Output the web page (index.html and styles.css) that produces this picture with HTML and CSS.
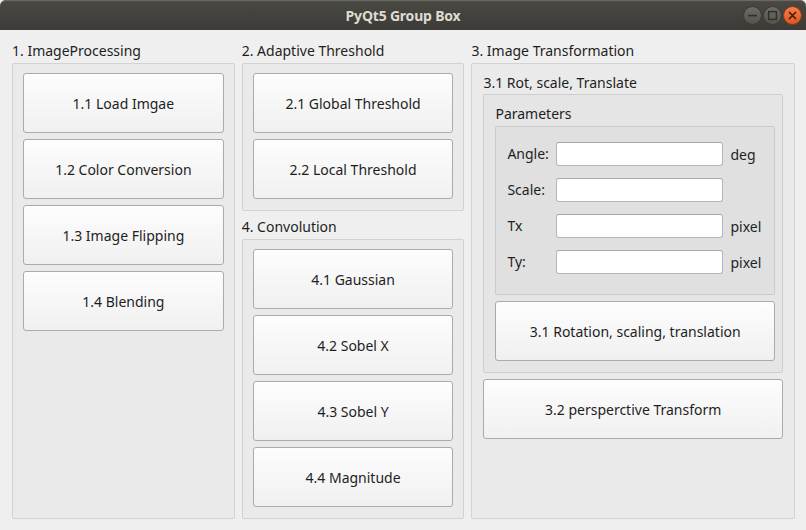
FILE: index.html
```html
<!DOCTYPE html>
<html>
<head>
<meta charset="utf-8">
<title>PyQt5 Group Box</title>
<link rel="stylesheet" href="styles.css">
</head>
<body>
<div class="window">
  <header class="titlebar">
    <div class="tb-side"></div>
    <div class="tb-title">PyQt5 Group Box</div>
    <div class="tb-side tb-buttons">
      <span class="wbtn">
        <svg width="19" height="19" viewBox="0 0 19 19"><defs><linearGradient id="g1" x1="0" y1="0" x2="0" y2="1"><stop offset="0" stop-color="#6e6c66"/><stop offset="1" stop-color="#55534e"/></linearGradient></defs><circle cx="9.5" cy="9.5" r="9" fill="url(#g1)" stroke="#3a3935" stroke-width="1"/><rect x="5" y="8.8" width="9" height="1.6" fill="#2f2e2b"/></svg>
      </span>
      <span class="wbtn">
        <svg width="19" height="19" viewBox="0 0 19 19"><circle cx="9.5" cy="9.5" r="9" fill="url(#g1)" stroke="#3a3935" stroke-width="1"/><rect x="5.6" y="5.6" width="7.8" height="7.8" fill="none" stroke="#2f2e2b" stroke-width="1.4"/></svg>
      </span>
      <span class="wbtn">
        <svg width="19" height="19" viewBox="0 0 19 19"><defs><linearGradient id="g2" x1="0" y1="0" x2="0" y2="1"><stop offset="0" stop-color="#f3804f"/><stop offset="1" stop-color="#e25420"/></linearGradient></defs><circle cx="9.5" cy="9.5" r="9" fill="url(#g2)" stroke="#8a3a17" stroke-width="1"/><path d="M6.4 6.4 L12.6 12.6 M12.6 6.4 L6.4 12.6" stroke="#4a1f0c" stroke-width="1.5" stroke-linecap="round"/></svg>
      </span>
    </div>
  </header>

  <main class="content">
    <section class="column col-narrow">
      <div class="gtitle">1. ImageProcessing</div>
      <div class="gbox gbox-fill">
        <button class="btn">1.1 Load Imgae</button>
        <button class="btn">1.2 Color Conversion</button>
        <button class="btn">1.3 Image Flipping</button>
        <button class="btn">1.4 Blending</button>
      </div>
    </section>

    <section class="column col-narrow">
      <div class="gtitle">2. Adaptive Threshold</div>
      <div class="gbox gbox-short">
        <button class="btn">2.1 Global Threshold</button>
        <button class="btn">2.2 Local Threshold</button>
      </div>
      <div class="gtitle gtitle-next">4. Convolution</div>
      <div class="gbox gbox-fill">
        <button class="btn">4.1 Gaussian</button>
        <button class="btn">4.2 Sobel X</button>
        <button class="btn">4.3 Sobel Y</button>
        <button class="btn">4.4 Magnitude</button>
      </div>
    </section>

    <section class="column col-wide">
      <div class="gtitle">3. Image Transformation</div>
      <div class="gbox gbox-fill gbox-wide">
        <div class="gtitle gtitle-inner">3.1 Rot, scale, Translate</div>
        <div class="gbox gbox-sub">
          <div class="gtitle gtitle-inner gtitle-params">Parameters</div>
          <div class="gbox gbox-params">
            <label class="plabel">Angle:</label><input class="pinput" type="text"><span class="punit">deg</span>
            <label class="plabel">Scale:</label><input class="pinput" type="text"><span class="punit"></span>
            <label class="plabel">Tx</label><input class="pinput" type="text"><span class="punit">pixel</span>
            <label class="plabel">Ty:</label><input class="pinput" type="text"><span class="punit">pixel</span>
          </div>
          <button class="btn btn-params">3.1 Rotation, scaling, translation</button>
        </div>
        <button class="btn btn-sub">3.2 persperctive Transform</button>
      </div>
    </section>
  </main>
</div>
</body>
</html>
```

FILE: styles.css
```css
* { box-sizing: border-box; }

html, body {
  margin: 0;
  padding: 0;
  background: #efefef;
}

body {
  font-family: "Noto Sans", "DejaVu Sans", sans-serif;
  font-size: 14px;
  color: #1e1e1e;
  width: 806px;
  height: 530px;
  overflow: hidden;
}

.window {
  width: 806px;
  height: 530px;
  display: flex;
  flex-direction: column;
}

.titlebar {
  height: 30px;
  flex: none;
  display: grid;
  grid-template-columns: 1fr auto 1fr;
  align-items: center;
  background: linear-gradient(#57554f 0px, #4a4843 2px, #3c3b37 100%);
  border-radius: 6px 6px 0 0;
  box-shadow: inset 0 1px 0 #6a6862;
}

.tb-title {
  font-weight: bold;
  font-size: 14px;
  color: #dfdbd2;
  letter-spacing: -0.2px;
}

.tb-buttons {
  display: flex;
  justify-content: flex-end;
  gap: 1px;
  padding-right: 4px;
  padding-top: 1px;
}

.wbtn {
  display: block;
  width: 19px;
  height: 19px;
}
.wbtn svg { display: block; }

.content {
  flex: 1;
  display: flex;
  gap: 7px;
  padding: 12px 11px 12px 12px;
}

.column {
  display: flex;
  flex-direction: column;
}
.col-narrow { width: 223px; }
.col-wide { width: 324px; }

.gtitle {
  line-height: 17px;
  height: 17px;
  margin-bottom: 4px;
  white-space: nowrap;
}
.gtitle-next { margin-top: 7px; }
.gtitle-inner { margin-bottom: -3px; }
.gtitle-params { margin-bottom: -2px; }

.gbox {
  border: 1px solid rgba(0, 0, 0, 0.1);
  border-radius: 2px;
  background: rgba(0, 0, 0, 0.018);
  display: flex;
  flex-direction: column;
  gap: 6px;
  padding: 9px 10px 11px 10px;
}
.gbox-fill { flex: 1; }

.gbox-wide { padding: 10px 11px 11px 11px; }
.gbox-sub { padding: 10px 7px 11px 11px; }

.gbox-params {
  display: grid;
  grid-template-columns: 43px 167px auto;
  column-gap: 6px;
  row-gap: 12px;
  align-items: center;
  padding: 15px 8px 20px 11px;
}

.plabel { line-height: 24px; }
.punit { padding-left: 1px; }

.pinput {
  width: 167px;
  height: 24px;
  border: 1px solid #b5b5b5;
  border-top-color: #a8a8a8;
  border-radius: 3px;
  background: #ffffff;
  font: inherit;
  padding: 0 4px;
  outline: none;
}

.btn {
  height: 60px;
  width: 100%;
  flex: none;
  font: inherit;
  color: #1e1e1e;
  border: 1px solid #ababab;
  border-radius: 3px;
  background: linear-gradient(#fdfdfd, #f0f0f0);
  padding: 0;
  cursor: default;
}
```
